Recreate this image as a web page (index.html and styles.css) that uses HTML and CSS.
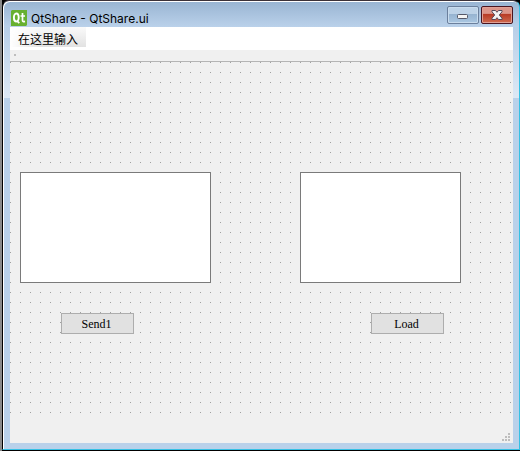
FILE: index.html
```html
<!DOCTYPE html>
<html lang="zh-CN">
<head>
<meta charset="utf-8">
<title>QtShare - QtShare.ui</title>
<link rel="stylesheet" href="styles.css">
</head>
<body>
<div class="window">
  <header class="titlebar">
    <svg class="logo" viewBox="0 0 16 16" aria-hidden="true">
      <path d="M1 0H16V15L15 16H0V1Z" fill="#67b030"/>
      <ellipse cx="5.3" cy="7.5" rx="2.4" ry="4" fill="none" stroke="#fff" stroke-width="1.9"/>
      <path d="M6 10.8L8.3 13.2M11.5 3V10.3Q11.5 12 14 11.4M9.5 6H14" fill="none" stroke="#fff" stroke-width="1.7"/>
    </svg>
    <h1 class="title">QtShare - QtShare.ui</h1>
    <div class="controls">
      <button class="control minimize" type="button" aria-label="Minimize">
        <svg width="12" height="6" viewBox="0 0 12 6"><rect x=".5" y=".5" width="10" height="4" rx="1" fill="#f4f4f4" stroke="#555868"/></svg>
      </button>
      <button class="control close" type="button" aria-label="Close">
        <svg width="12" height="10" viewBox="0 0 12 10"><path d="M1 .5H4.5L6 2.3L7.5 .5H11V1.8L8.3 5L11 8.2V9.5H7.5L6 7.7L4.5 9.5H1V8.2L3.7 5L1 1.8Z" fill="#f2f2f2" stroke="#56495a"/></svg>
      </button>
    </div>
  </header>
  <main class="content">
    <nav class="menubar"><button class="menu-item" type="button">在这里输入</button></nav>
    <div class="toolbar"><span class="handle"></span></div>
    <form class="canvas">
      <textarea class="view" aria-label="Send"></textarea>
      <textarea class="view" aria-label="Load"></textarea>
      <button class="push send" type="button">Send1</button>
      <button class="push load" type="button">Load</button>
    </form>
    <footer class="statusbar">
      <svg width="8" height="8" viewBox="0 0 8 8" fill="#bdbdbd" aria-hidden="true"><path d="M6 0h2v2H6zM3 3h2v2H3zM6 3h2v2H6zM0 6h2v2H0zM3 6h2v2H3zM6 6h2v2H6z"/></svg>
    </footer>
  </main>
</div>
</body>
</html>
```
FILE: styles.css
```css
* {
  box-sizing: border-box;
}

body {
  height: 100vh;
  margin: 0;
  padding-bottom: 1px;
  background: linear-gradient(90deg, #8a8a8a 2px, #000 2px);
  font-family: "Noto Sans CJK SC", "Noto Sans", sans-serif;
  font-size: 12px;
  color: #000;
}

.window {
  display: flex;
  flex-direction: column;
  height: 100%;
  margin-left: 2px;
  padding: 0 6px 6px 7px;
  border: 1px solid;
  border-color: #3b3138 #35c0e4 #35c0e4 #000;
  border-radius: 7px 7px 0 0;
  box-shadow: inset 1px 1px #fff;
  background:
    linear-gradient(#98b4d2, #bad1ea) 0 0 / 100% 26px no-repeat,
    linear-gradient(#b8cfe8, #dce8f5) 0 26px / 100% 71px no-repeat,
    #b9d1ea;
}

.titlebar {
  display: flex;
  flex: none;
  height: 26px;
}

.logo {
  width: 16px;
  height: 16px;
  margin: 9px 4px 0 1px;
}

.title {
  flex: 1;
  margin: 9px 0 0;
  font-family: Inter, "Noto Sans", sans-serif;
  font-size: 12px;
  font-weight: 400;
  line-height: 17px;
}

.controls {
  display: flex;
  gap: 2px;
  padding: 5px 0 3px 0;
}

.control {
  display: flex;
  align-items: center;
  justify-content: center;
  width: 32px;
  height: 18px;
  padding: 0;
  border: 1px solid #6b7f9c;
  border-radius: 2px;
  box-shadow: inset 0 0 0 1px #c9dcee;
  background: linear-gradient(#bdd2e7 45%, #96b3d0 45%, #aac7e2);
}

.minimize {
  padding-top: 4px;
}

.close {
  border-color: #4a1420;
  box-shadow: inset 0 0 0 1px #e0a095;
  background: linear-gradient(#dc958a 40%, #b83a25 45%, #cf6b50);
}

.content {
  display: flex;
  flex: 1;
  flex-direction: column;
  background: #f0f0f0;
}

.menubar {
  height: 24px;
  border-bottom: 1px solid #f0f0f0;
  background: #fff;
}

.menu-item {
  display: block;
  height: 20px;
  padding: 2px 8px 0;
  border: 0;
  background:
    linear-gradient(90deg, #fff, #fff0 40%),
    linear-gradient(#fafafa, #e2e2e2);
  font: inherit;
  line-height: 20px;
}

.toolbar {
  height: 11px;
  padding: 3px 4px;
  border-bottom: 1px solid #b4b4b4;
}

.handle {
  display: block;
  width: 2px;
  height: 2px;
  background: #bdbdbd;
}

.canvas {
  display: grid;
  flex: 1;
  grid-template-columns: 191fr 161fr;
  grid-template-rows: 111px 21px;
  gap: 30px 89px;
  padding: 110px 52px 0 10px;
  background: conic-gradient(from 270deg at 1px 1px, #a0a0a0 90deg, transparent 0) 0 0 / 10px 10px;
}

.view {
  width: 100%;
  height: 100%;
  border: 1px solid #7a7a7a;
  background: #fff;
  resize: none;
}

.push {
  width: 73px;
  padding: 2px 2px 0 0;
  border: 1px solid #adadad;
  background: #e1e1e1;
  font: 12px "Liberation Serif", serif;
}

.send {
  margin-left: 41px;
}

.load {
  margin-left: 71px;
}

.statusbar {
  display: flex;
  align-items: flex-end;
  justify-content: flex-end;
  height: 30px;
  padding: 2px 3px;
}
```
